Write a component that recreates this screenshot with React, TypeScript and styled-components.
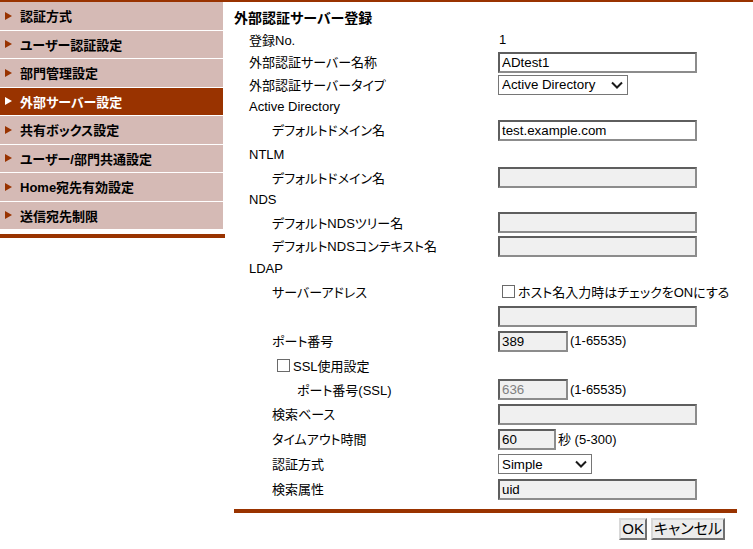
import styled, { createGlobalStyle } from "styled-components";

const BROWN = "#993300";

const GlobalStyle = createGlobalStyle`
  body {
    margin: 0;
    background: #fff;
    font-family: "Liberation Sans", "Noto Sans CJK JP", sans-serif;
    font-size: 13px;
    font-feature-settings: "palt";
    color: #000;
  }
`;

const navItems = [
  "認証方式",
  "ユーザー認証設定",
  "部門管理設定",
  "外部サーバー設定",
  "共有ボックス設定",
  "ユーザー/部門共通設定",
  "Home宛先有効設定",
  "送信宛先制限",
];

function Select({ value, width }: { value: string; width: number }) {
  return (
    <SelectWrap $width={width}>
      <SelectBox defaultValue={value}>
        <option>{value}</option>
      </SelectBox>
      <Chevron viewBox="0 0 12 8">
        <path d="M1 1.5 L6 6.5 L11 1.5" fill="none" stroke="#1a1a1a" strokeWidth="2" />
      </Chevron>
    </SelectWrap>
  );
}

function CheckLabel({ text }: { text: string }) {
  return (
    <CheckWrap>
      <Box type="checkbox" />
      <span>{text}</span>
    </CheckWrap>
  );
}

function App() {
  return (
    <>
      <GlobalStyle />
      <Page>
        <Sidebar>
          <NavList>
            {navItems.map((label, i) => (
              <NavItem key={label} $active={i === 3}>
                <Arrow $active={i === 3} />
                {label}
              </NavItem>
            ))}
          </NavList>
          <SideBar />
        </Sidebar>

        <Main>
          <Row $h={22}>
            <Title>外部認証サーバー登録</Title>
          </Row>
          <Row $h={22}>
            <Label $indent={15}>登録No.</Label>
            <Value>1</Value>
          </Row>
          <Row $h={23}>
            <Label $indent={15}>外部認証サーバー名称</Label>
            <Value>
              <Input $width={199} defaultValue="ADtest1" />
            </Value>
          </Row>
          <Row $h={22}>
            <Label $indent={15}>外部認証サーバータイプ</Label>
            <Value>
              <Select value="Active Directory" width={130} />
            </Value>
          </Row>
          <Row $h={22}>
            <Label $indent={15}>Active Directory</Label>
          </Row>
          <Row $h={25}>
            <Label $indent={38}>デフォルトドメイン名</Label>
            <Value>
              <Input $width={199} defaultValue="test.example.com" />
            </Value>
          </Row>

          <Row $h={24}>
            <Label $indent={15}>NTLM</Label>
          </Row>
          <Row $h={22}>
            <Label $indent={38}>デフォルトドメイン名</Label>
            <Value>
              <Input $width={199} $gray />
            </Value>
          </Row>

          <Row $h={22}>
            <Label $indent={15}>NDS</Label>
          </Row>
          <Row $h={24}>
            <Label $indent={38}>デフォルトNDSツリー名</Label>
            <Value>
              <Input $width={199} $gray />
            </Value>
          </Row>
          <Row $h={23}>
            <Label $indent={38}>デフォルトNDSコンテキスト名</Label>
            <Value>
              <Input $width={199} $gray />
            </Value>
          </Row>

          <Row $h={23}>
            <Label $indent={15}>LDAP</Label>
          </Row>
          <Row $h={23}>
            <Label $indent={38}>サーバーアドレス</Label>
            <Value $indent={4}>
              <CheckLabel text="ホスト名入力時はチェックをONにする" />
            </Value>
          </Row>
          <Row $h={25}>
            <Label />
            <Value>
              <Input $width={199} $gray />
            </Value>
          </Row>
          <Row $h={25}>
            <Label $indent={38}>ポート番号</Label>
            <Value>
              <Input $width={70} $gray defaultValue="389" />
              <Hint>(1-65535)</Hint>
            </Value>
          </Row>
          <Row $h={24}>
            <Label $indent={43}>
              <CheckLabel text="SSL使用設定" />
            </Label>
          </Row>
          <Row $h={24}>
            <Label $indent={63}>ポート番号(SSL)</Label>
            <Value>
              <Input $width={70} $gray disabled defaultValue="636" />
              <Hint>(1-65535)</Hint>
            </Value>
          </Row>
          <Row $h={25}>
            <Label $indent={38}>検索ベース</Label>
            <Value>
              <Input $width={199} $gray />
            </Value>
          </Row>
          <Row $h={25}>
            <Label $indent={38}>タイムアウト時間</Label>
            <Value>
              <Input $width={58} $gray defaultValue="60" />
              <Hint>秒 (5-300)</Hint>
            </Value>
          </Row>
          <Row $h={25}>
            <Label $indent={38}>認証方式</Label>
            <Value>
              <Select value="Simple" width={94} />
            </Value>
          </Row>
          <Row $h={25}>
            <Label $indent={38}>検索属性</Label>
            <Value>
              <Input $width={199} $gray defaultValue="uid" />
            </Value>
          </Row>

          <Divider />
          <Buttons>
            <Button>OK</Button>
            <Button>キャンセル</Button>
          </Buttons>
        </Main>
      </Page>
    </>
  );
}

const Page = styled.div`
  display: flex;
  align-items: flex-start;
  border-top: 2px solid ${BROWN};
  min-height: 547px;
`;

const Sidebar = styled.div`
  width: 225px;
  flex-shrink: 0;
`;

const NavList = styled.div`
  width: 223px;
  display: flex;
  flex-direction: column;
  gap: 1px;
`;

const NavItem = styled.div<{ $active?: boolean }>`
  height: 27.5px;
  display: flex;
  align-items: center;
  padding-left: 5px;
  background: ${(p) => (p.$active ? BROWN : "#d5bab5")};
  color: ${(p) => (p.$active ? "#fff" : "#000")};
  font-weight: bold;
  font-size: 13px;
  white-space: nowrap;
`;

const Arrow = styled.span<{ $active?: boolean }>`
  width: 0;
  height: 0;
  border-left: 7px solid ${(p) => (p.$active ? "#fff" : BROWN)};
  border-top: 4.5px solid transparent;
  border-bottom: 4.5px solid transparent;
  margin-right: 8px;
`;

const SideBar = styled.div`
  margin-top: 5px;
  height: 4px;
  background: ${BROWN};
`;

const Main = styled.div`
  margin-left: 9px;
  padding-top: 4px;
  width: 503px;
`;

const Row = styled.div<{ $h: number }>`
  display: grid;
  grid-template-columns: 264px 1fr;
  align-items: center;
  height: ${(p) => p.$h}px;
`;

const Title = styled.div`
  grid-column: 1 / -1;
  font-weight: bold;
  font-size: 14px;
`;

const Label = styled.div<{ $indent?: number }>`
  padding-left: ${(p) => p.$indent ?? 0}px;
  white-space: nowrap;
`;

const Value = styled.div<{ $indent?: number }>`
  display: flex;
  align-items: center;
  padding-left: ${(p) => p.$indent ?? 1}px;
  white-space: nowrap;
`;

const Input = styled.input<{ $width: number; $gray?: boolean }>`
  box-sizing: border-box;
  width: ${(p) => p.$width}px;
  height: 21px;
  margin: 1px 0 0 -1px;
  padding: 0 2px;
  border-width: 2px;
  border-style: solid;
  border-color: #5e5e5e #8c8c8c #8c8c8c #5e5e5e;
  background: ${(p) => (p.$gray ? "#f0f0f0" : "#fff")};
  font-family: "Liberation Sans", sans-serif;
  font-size: 13.33px;
  color: #000;
  outline: none;

  &:disabled {
    color: #808080;
  }
`;

const Hint = styled.span`
  margin-left: 2px;
`;

const SelectWrap = styled.div<{ $width: number }>`
  position: relative;
  width: ${(p) => p.$width}px;
  margin: 1px 0 0 -1px;
`;

const SelectBox = styled.select`
  appearance: none;
  box-sizing: border-box;
  width: 100%;
  height: 20px;
  margin: 0;
  padding: 0 0 0 3px;
  border: 1px solid #767676;
  border-radius: 0;
  background: #fff;
  font-family: "Liberation Sans", sans-serif;
  font-size: 13.33px;
  color: #000;
`;

const Chevron = styled.svg`
  position: absolute;
  right: 5px;
  top: 6px;
  width: 12px;
  height: 8px;
  pointer-events: none;
`;

const CheckWrap = styled.label`
  display: inline-flex;
  align-items: center;
  gap: 3px;
`;

const Box = styled.input`
  appearance: none;
  box-sizing: border-box;
  width: 13px;
  height: 13px;
  margin: 0;
  border: 1px solid #6a6a6a;
  background: #fff;
`;

const Divider = styled.div`
  margin-top: 8px;
  height: 4px;
  background: ${BROWN};
`;

const Buttons = styled.div`
  display: flex;
  justify-content: flex-end;
  gap: 4px;
  margin-top: 5px;
  padding-right: 12px;
`;

const Button = styled.button`
  box-sizing: border-box;
  height: 22px;
  margin: 0;
  padding: 0 1px;
  border-width: 2px;
  border-style: solid;
  border-color: #d8d8d8 #707070 #707070 #d8d8d8;
  background: #ebebeb;
  font-family: "Liberation Sans", "Noto Sans CJK JP", sans-serif;
  font-feature-settings: "palt";
  font-size: 15px;
  line-height: 16px;
  color: #000;
`;

export default App;
